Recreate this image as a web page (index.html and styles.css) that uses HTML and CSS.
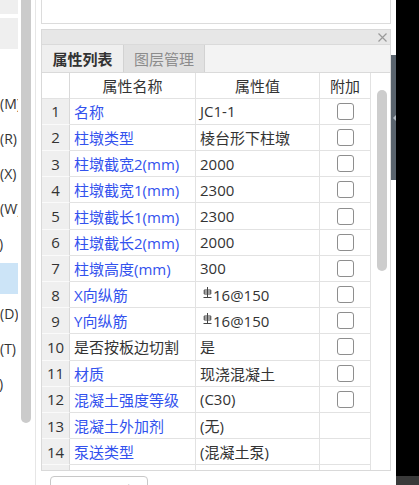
FILE: index.html
```html
<!DOCTYPE html>
<html lang="zh">
<head>
<meta charset="utf-8">
<title>属性列表</title>
<link rel="stylesheet" href="styles.css">
</head>
<body>
<div class="left">
  <div class="left-list">
    <div class="lbox1"></div>
    <div class="lbox2"></div>
    <div class="litem"><span class="lt">(M)</span></div>
    <div class="litem"><span class="lt">(R)</span></div>
    <div class="litem"><span class="lt">(X)</span></div>
    <div class="litem"><span class="lt">(W)</span></div>
    <div class="litem"><span class="lt lt-r">)</span></div>
    <div class="litem sel"></div>
    <div class="litem"><span class="lt">(D)</span></div>
    <div class="litem"><span class="lt">(T)</span></div>
    <div class="litem"><span class="lt lt-r">)</span></div>
  </div>
  <div class="left-scroll"></div>
</div>

<div class="main">
  <div class="topbox"></div>
  <div class="panel">
    <div class="ptitle">
      <svg class="close" viewBox="0 0 9 9" width="9" height="9"><path d="M0.5 0.5L8.5 8.5M8.5 0.5L0.5 8.5" stroke="#9a9a9a" stroke-width="1.2" fill="none"/></svg>
    </div>
    <div class="tabs">
      <div class="tab active">属性列表</div>
      <div class="tab inactive">图层管理</div>
    </div>
    <div class="tablewrap">
      <div class="grid">
        <div class="c num hdr"></div><div class="c ctr hdr">属性名称</div><div class="c ctr hdr">属性值</div><div class="c ctr hdr">附加</div>

        <div class="c num">1</div><div class="c name">名称</div><div class="c val">JC1-1</div><div class="c ctr"><span class="cb"></span></div>
        <div class="c num">2</div><div class="c name">柱墩类型</div><div class="c val">棱台形下柱墩</div><div class="c ctr"><span class="cb"></span></div>
        <div class="c num">3</div><div class="c name">柱墩截宽2(mm)</div><div class="c val">2000</div><div class="c ctr"><span class="cb"></span></div>
        <div class="c num">4</div><div class="c name">柱墩截宽1(mm)</div><div class="c val">2300</div><div class="c ctr"><span class="cb"></span></div>
        <div class="c num">5</div><div class="c name">柱墩截长1(mm)</div><div class="c val">2300</div><div class="c ctr"><span class="cb"></span></div>
        <div class="c num">6</div><div class="c name">柱墩截长2(mm)</div><div class="c val">2000</div><div class="c ctr"><span class="cb"></span></div>
        <div class="c num">7</div><div class="c name">柱墩高度(mm)</div><div class="c val">300</div><div class="c ctr"><span class="cb"></span></div>
        <div class="c num">8</div><div class="c name">X向纵筋</div><div class="c val"><svg class="rebar" viewBox="0 0 9 12" width="9" height="12"><path d="M4.5 0V10M1.2 3H7.8V7H1.2ZM1.2 5H7.8M0.5 10.5H8.5" stroke="#444" stroke-width="1" fill="none"/></svg>16@150</div><div class="c ctr"><span class="cb"></span></div>
        <div class="c num">9</div><div class="c name">Y向纵筋</div><div class="c val"><svg class="rebar" viewBox="0 0 9 12" width="9" height="12"><path d="M4.5 0V10M1.2 3H7.8V7H1.2ZM1.2 5H7.8M0.5 10.5H8.5" stroke="#444" stroke-width="1" fill="none"/></svg>16@150</div><div class="c ctr"><span class="cb"></span></div>
        <div class="c num">10</div><div class="c name black">是否按板边切割</div><div class="c val">是</div><div class="c ctr"><span class="cb"></span></div>
        <div class="c num">11</div><div class="c name">材质</div><div class="c val">现浇混凝土</div><div class="c ctr"><span class="cb"></span></div>
        <div class="c num">12</div><div class="c name">混凝土强度等级</div><div class="c val">(C30)</div><div class="c ctr"><span class="cb"></span></div>
        <div class="c num">13</div><div class="c name">混凝土外加剂</div><div class="c val">(无)</div><div class="c ctr"></div>
        <div class="c num">14</div><div class="c name">泵送类型</div><div class="c val">(混凝土泵)</div><div class="c ctr"></div>
        <div class="c num"></div><div class="c name"></div><div class="c val"></div><div class="c ctr"></div>
      </div>
      <div class="vscroll"><div class="thumb"></div></div>
    </div>
  </div>
  <div class="btn"><span class="btn-ico"></span>显示设置</div>
</div>

<div class="split">
  <div class="split-bar"><span class="arrow"></span></div>
</div>

<div class="right">
  <div class="rbottom"></div>
</div>
</body>
</html>
```

FILE: styles.css
```css
* {
  box-sizing: border-box;
}

body {
  margin: 0;
  width: 419px;
  height: 485px;
  overflow: hidden;
  display: flex;
  background: #ffffff;
  font-family: "Open Sans", "Noto Sans CJK SC", sans-serif;
  color: #333333;
  font-size: 15px;
}

/* left tree panel */
.left {
  width: 36px;
  flex-shrink: 0;
  border-right: 1px solid #e6e6e6;
  display: flex;
}

.left-list {
  width: 18px;
  overflow: hidden;
  display: flex;
  flex-direction: column;
}

.lbox1 {
  height: 14px;
  flex-shrink: 0;
  background: #efefef;
}

.lbox2 {
  height: 31px;
  flex-shrink: 0;
  margin-top: 4px;
  margin-bottom: 38.5px;
  background: #efefef;
}

.litem {
  height: 31px;
  flex-shrink: 0;
  margin-bottom: 4px;
  line-height: 31px;
  font-size: 14px;
  white-space: nowrap;
  color: #333333;
}

.litem.sel {
  background: #cce4f7;
}

.lt {
  display: inline-block;
}

.lt-r {
  margin-left: -1px;
}

.left-scroll {
  width: 10px;
  height: 423px;
  margin-left: 3px;
  background: #cbcbcb;
  border-radius: 0 0 5px 5px;
}

/* main property panel */
.main {
  width: 350px;
  flex-shrink: 0;
  margin-left: 5px;
  display: flex;
  flex-direction: column;
}

.topbox {
  height: 24px;
  flex-shrink: 0;
  border: 1px solid #dcdcdc;
  border-top: none;
  background: #ffffff;
}

.panel {
  margin-top: 5px;
  border: 1px solid #d9d9d9;
  display: flex;
  flex-direction: column;
  flex-shrink: 0;
}

.ptitle {
  height: 15px;
  background: #e7e7e7;
  border-bottom: 1px solid #dadada;
  display: flex;
  justify-content: flex-end;
  align-items: center;
  padding-right: 3px;
}

.close {
  display: block;
}

.tabs {
  height: 28px;
  background: #f3f3f3;
  border-bottom: 1px solid #dadada;
  display: flex;
}

.tab {
  width: 81px;
  display: flex;
  align-items: center;
  justify-content: center;
  font-size: 15px;
}

.tab.active {
  background: #efefef;
  font-weight: bold;
  color: #333333;
}

.tab.inactive {
  width: 82px;
  background: #e1e1e1;
  color: #8c8c8c;
  border-left: 1px solid #d2d2d2;
  border-right: 1px solid #d2d2d2;
}

.tablewrap {
  height: 397px;
  display: flex;
  overflow: hidden;
  background: #ffffff;
}

.grid {
  width: 329px;
  flex-shrink: 0;
  display: grid;
  grid-template-columns: 28px 126px 124px 51px;
  grid-template-rows: 25.7px;
  grid-auto-rows: 26.2px;
  overflow: hidden;
}

.c {
  border-right: 1px solid #e2e2e2;
  border-bottom: 1px solid #e2e2e2;
  display: flex;
  align-items: center;
  white-space: nowrap;
  overflow: hidden;
  font-size: 15px;
}

.num {
  justify-content: center;
  background: #efefef;
  border-right-color: #d9d9d9;
  border-bottom-color: #fafafa;
  color: #333333;
}

.num.hdr {
  background: #ffffff;
  border-bottom-color: #e2e2e2;
}

.ctr {
  justify-content: center;
}

.hdr {
  color: #333333;
}

.name {
  padding-left: 4px;
  color: #3352ee;
}

.name.black {
  color: #333333;
}

.val {
  padding-left: 4px;
  color: #333333;
}

.rebar {
  display: block;
  margin-left: 3px;
  margin-right: 1px;
  margin-top: -3px;
  flex-shrink: 0;
}

.cb {
  width: 17px;
  height: 17px;
  border: 1px solid #8e8e8e;
  border-radius: 3px;
  background: #ffffff;
}

.vscroll {
  width: 19px;
  padding-top: 17px;
  padding-left: 6px;
}

.thumb {
  width: 10px;
  height: 181px;
  border-radius: 5px;
  background: #cdcdcd;
}

.btn {
  margin-top: 5px;
  margin-left: 9px;
  width: 98px;
  height: 30px;
  flex-shrink: 0;
  border: 1px solid #c8c8c8;
  border-radius: 4px;
  background: #ffffff;
  display: flex;
  align-items: flex-start;
  padding-top: 4px;
  padding-left: 37px;
  font-size: 15px;
  line-height: 20px;
  color: #333333;
  white-space: nowrap;
}

.btn-ico {
  width: 6px;
  height: 6px;
  margin-top: 7px;
  margin-right: 8px;
  border-top: 1px solid #666666;
}

/* splitter */
.split {
  width: 5px;
  flex-shrink: 0;
  display: flex;
  flex-direction: column;
}

.split-bar {
  margin-top: 55px;
  height: 125px;
  background: #5a646e;
  display: flex;
  align-items: center;
  justify-content: flex-end;
}

.arrow {
  width: 0;
  height: 0;
  border-right: 3px solid #b3bbc4;
  border-top: 3px solid transparent;
  border-bottom: 3px solid transparent;
}

.right {
  flex: 1;
  background: #000000;
  display: flex;
  flex-direction: column;
  justify-content: flex-end;
}

.rbottom {
  height: 9px;
  background: #3a3a3a;
}
```
